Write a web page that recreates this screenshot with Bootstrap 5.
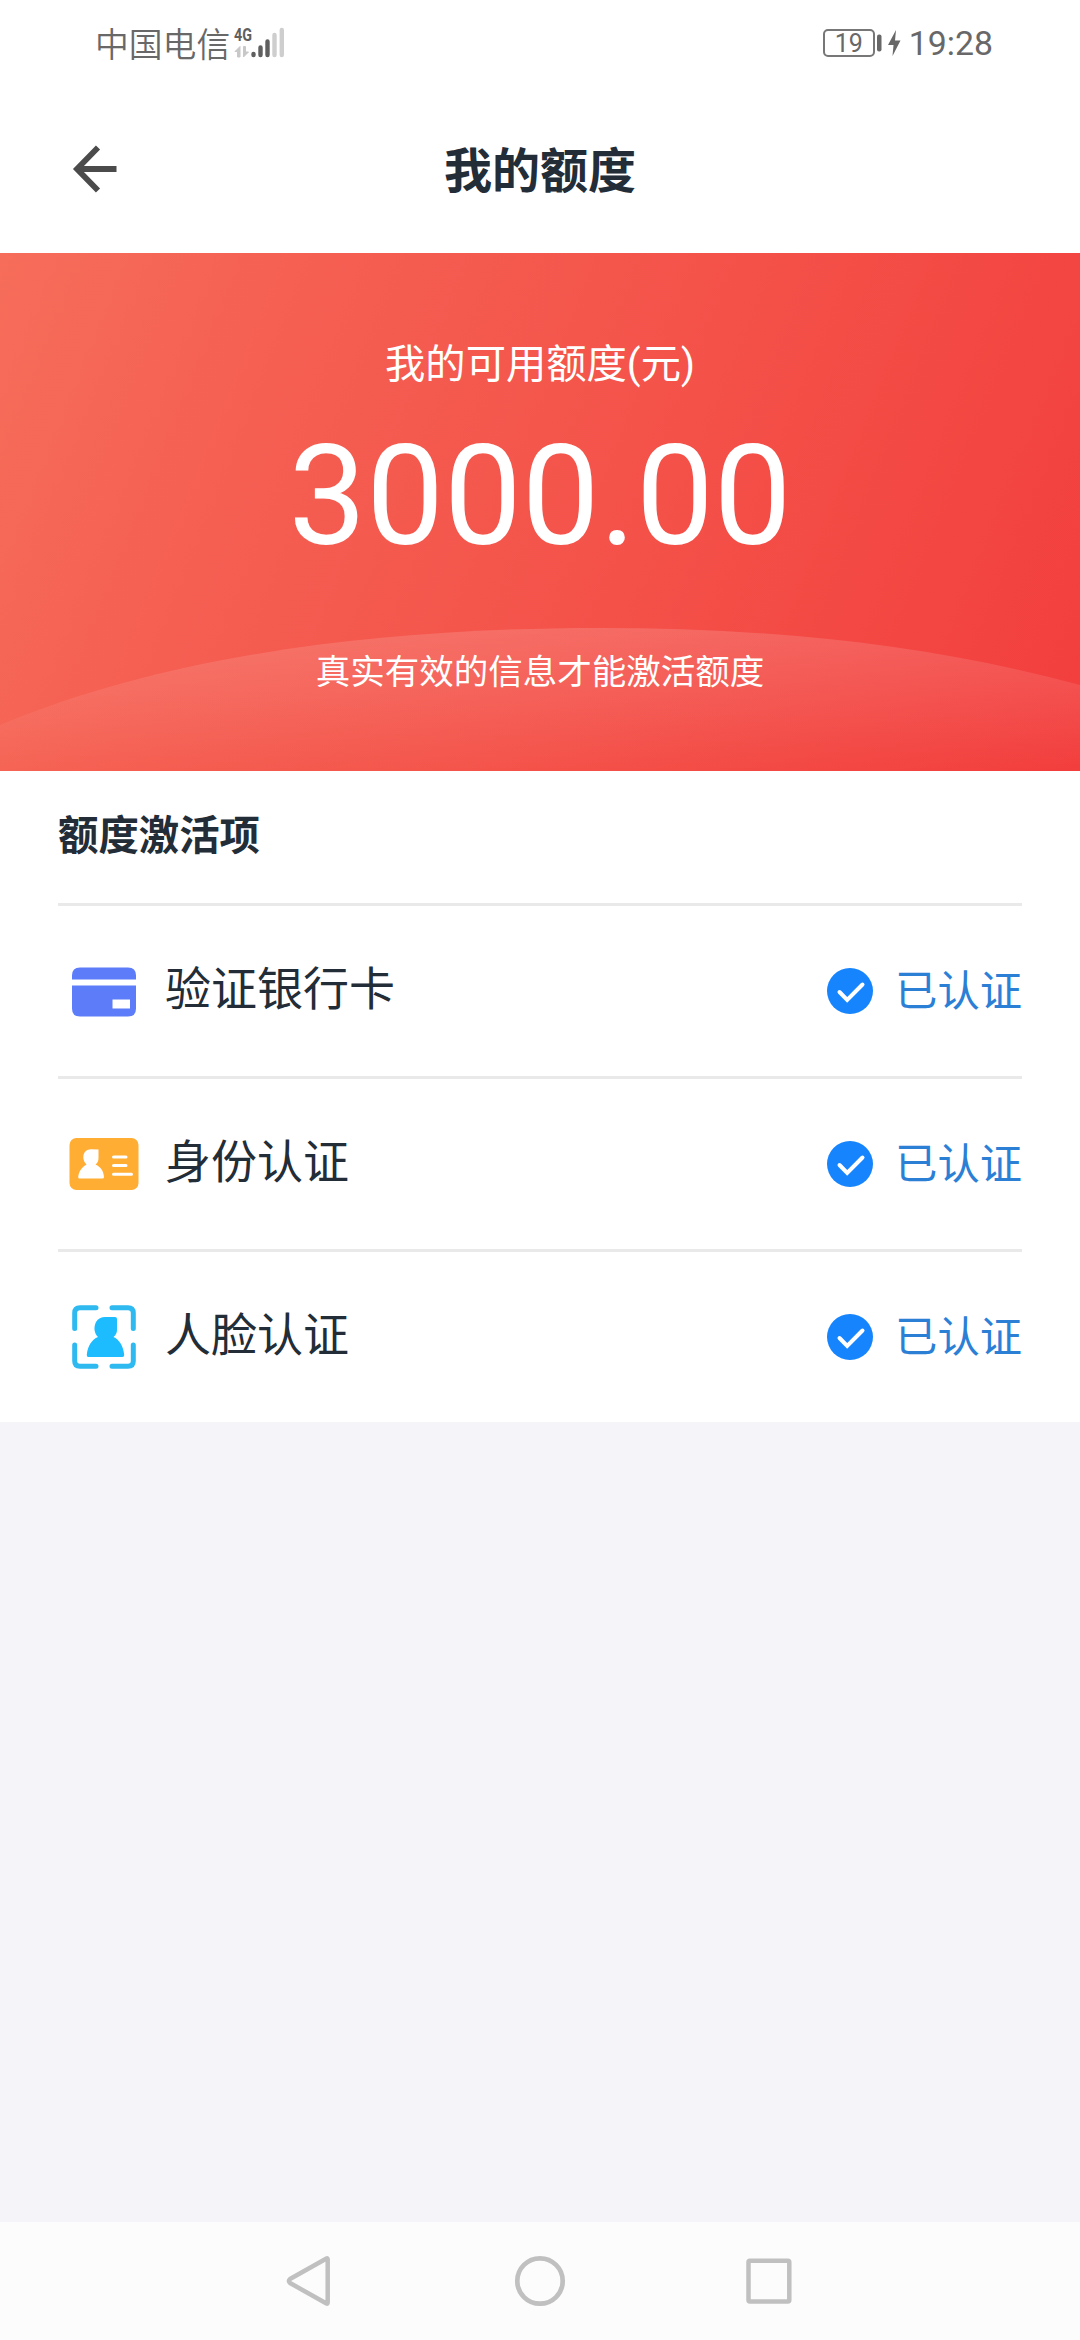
<!DOCTYPE html>
<html lang="zh-CN">
<head>
<meta charset="utf-8">
<meta name="viewport" content="width=device-width, initial-scale=1">
<title>我的额度</title>
<link rel="stylesheet" href="https://cdn.jsdelivr.net/npm/bootstrap@5.3.0/dist/css/bootstrap.min.css">
<style>
  body { font-family: "Noto Sans CJK SC", sans-serif; color: #232d37; background: #f4f4f9; line-height: 1; }
  svg { display: block; flex: none; }
  .screen { width: 1080px; height: 2340px; }
  .statusbar { height: 86px; padding: 0 87px 0 95px; color: #686868; font-size: 33.8px; }
  .carrier { font-weight: 350; }
  .latin { font-family: Roboto, sans-serif; }
  .clock { padding-top: 2px; }
  .battery { width: 52px; height: 28px; border: 2px solid #777; border-radius: 5px; font-size: 25px; line-height: 25px; }
  .titlebar { height: 167px; padding-bottom: 6px; }
  .titlebar h1 { font-size: 48px; font-weight: 700; line-height: 56px; }
  .back-arrow { left: 48px; top: 53px; }
  .hero { height: 518px; background: linear-gradient(112deg, #f66d5a 0%, #f55f52 25%, #f4534a 55%, #f34642 82%, #f23e3d 100%); }
  .hero-arc { z-index: 0; }
  .hero-text { z-index: 1; padding-top: 83px; }
  .hero-label { font-size: 40.3px; line-height: 50px; }
  .amount { font-size: 138.4px; line-height: 140px; margin-top: 37px; }
  .hero-hint { font-size: 34.5px; line-height: 44px; margin-top: 80px; }
  .panel { height: 651px; padding: 0 58px; }
  .panel h2 { font-size: 40.4px; font-weight: 700; height: 132px; line-height: 123px; }
  .auth-row { height: 173px; border-top: 3px solid #e9e9e9; padding-left: 8px; }
  .auth-name { font-size: 46px; margin-left: 22px; line-height: 60px; padding-bottom: 12px; }
  .auth-state { font-size: 42.3px; color: #2b80d6; margin-left: 22px; line-height: 56px; padding-bottom: 7px; }
  .sysnav { height: 118px; background: #fcfcfc; gap: 170px; }
</style>
</head>
<body>
<div class="screen d-flex flex-column">
  <div class="statusbar bg-white d-flex align-items-center justify-content-between">
    <div class="d-flex align-items-center">
      <span class="carrier">中国电信</span>
      <svg class="ms-1" width="54" height="42" viewBox="0 -4 54 42">
        <text x="0" y="14.500" font-family="Roboto" font-weight="700" font-size="18.5" textLength="18" lengthAdjust="spacingAndGlyphs" fill="#5f5f5f">4G</text>
        <path d="M6 20.500V31H3.500V25.500H1ZM9.500 20.500V31L14.500 26H11.500V20.500Z" fill="#c8c8c8" stroke="#c8c8c8"/>
        <g stroke-width="4.400" stroke-linecap="round" stroke="#5f5f5f">
          <path d="M19.500 28V29M26.500 21.500V29M33.500 15.500V29"/>
          <path d="M40.500 9V29M47.800 4V29" stroke="#cecece"/>
        </g>
      </svg>
    </div>
    <div class="d-flex align-items-center latin">
      <div class="battery d-flex justify-content-center">19</div>
      <svg width="34" height="28" viewBox="0 0 34 28">
        <rect x="2" y="5.500" width="4.500" height="17" rx="2" fill="#686868"/>
        <path d="M21 1 13 16H18.500L17.500 27 25.500 11.500H20Z" fill="#686868"/>
      </svg>
      <span class="clock">19:28</span>
    </div>
  </div>

  <header class="titlebar bg-white position-relative d-flex justify-content-center align-items-center">
    <svg class="back-arrow position-absolute" width="90" height="60" viewBox="48 139 90 60">
      <path d="M98 147.500 77 169 98 190.500M77 169H116.500" fill="none" stroke="#4b4b4b" stroke-width="5.800"/>
    </svg>
    <h1 class="m-0">我的额度</h1>
  </header>

  <section class="hero position-relative overflow-hidden text-white text-center">
    <svg class="hero-arc position-absolute bottom-0 start-0" width="1080" height="143" viewBox="0 0 1080 143">
      <defs><linearGradient id="glow" x1="0" y1="0" x2="0" y2="143" gradientUnits="userSpaceOnUse">
        <stop offset="0" stop-color="#fff" stop-opacity=".15"/><stop offset="1" stop-color="#fff" stop-opacity="0"/>
      </linearGradient></defs>
      <path d="M0 97C180 22 400 0 600 0C760 0 920 14 1080 57V143H0Z" fill="url(#glow)"/>
    </svg>
    <div class="hero-text position-relative">
      <div class="hero-label">我的可用额度<span class="latin">(</span>元<span class="latin">)</span></div>
      <div class="amount latin">3000.00</div>
      <div class="hero-hint">真实有效的信息才能激活额度</div>
    </div>
  </section>

  <main class="panel bg-white">
    <h2 class="m-0">额度激活项</h2>
    <div class="auth-row d-flex align-items-center">
      <svg width="77" height="70" viewBox="66 1127.500 77 70">
        <path d="M72 1151V1147Q72 1139 80 1139H128Q136 1139 136 1147V1151ZM72 1157H136V1180Q136 1188 128 1188H80Q72 1188 72 1180ZM112.500 1171V1180H130V1171Z" fill="#5c7cfa" fill-rule="evenodd"/>
      </svg>
      <span class="auth-name me-auto">验证银行卡</span>
      <svg width="46" height="46" viewBox="0 0 46 46"><circle cx="23" cy="23" r="23" fill="#1684fc"/><path d="M12.500 24 20.200 32 35.500 16.500" fill="none" stroke="#fff" stroke-width="4" stroke-linecap="round"/></svg>
      <span class="auth-state">已认证</span>
    </div>
    <div class="auth-row d-flex align-items-center">
      <svg width="77" height="70" viewBox="66 1129 77 70">
        <rect x="69.500" y="1138" width="69" height="52" rx="7" fill="#ffad33"/>
        <path d="M98.500 1149.500V1158Q98.500 1162.500 95.500 1164.500C101 1167 103.500 1171 104 1177Q104 1178.500 102.500 1178.500H79.500Q78 1178.500 78.200 1177C79 1171 82 1167 86.500 1164.500C83 1161 82.500 1156 84.500 1152.500Q87 1149.200 91 1149.200Z" fill="#fff"/>
        <path d="M113.500 1157H126M113.500 1165.500H126M113.500 1174.200H131.500" stroke="#fff" stroke-width="3" stroke-linecap="round"/>
      </svg>
      <span class="auth-name me-auto">身份认证</span>
      <svg width="46" height="46" viewBox="0 0 46 46"><circle cx="23" cy="23" r="23" fill="#1684fc"/><path d="M12.500 24 20.200 32 35.500 16.500" fill="none" stroke="#fff" stroke-width="4" stroke-linecap="round"/></svg>
      <span class="auth-state">已认证</span>
    </div>
    <div class="auth-row d-flex align-items-center">
      <svg width="77" height="70" viewBox="66 1302 77 70">
        <path d="M74.700 1328.500V1313Q74.700 1307.700 80 1307.700H96M112 1307.700H128Q133.300 1307.700 133.300 1313V1328.500M133.300 1345V1361Q133.300 1366.300 128 1366.300H112M96 1366.300H80Q74.700 1366.300 74.700 1361V1345" fill="none" stroke="#2eb9f0" stroke-width="5" stroke-linecap="round"/>
        <path d="M115 1317Q117 1317 117 1319V1330Q117 1334 113.500 1337C119 1339.500 123.500 1346 124.200 1355Q124.200 1357 122.500 1357H88.500Q86.500 1357 86.800 1355C87.500 1346 92 1339.500 98 1337C94 1333 93.500 1327 96 1322Q99 1317 105.500 1317Z" fill="#1dbcff"/>
      </svg>
      <span class="auth-name me-auto">人脸认证</span>
      <svg width="46" height="46" viewBox="0 0 46 46"><circle cx="23" cy="23" r="23" fill="#1684fc"/><path d="M12.500 24 20.200 32 35.500 16.500" fill="none" stroke="#fff" stroke-width="4" stroke-linecap="round"/></svg>
      <span class="auth-state">已认证</span>
    </div>
  </main>

  <nav class="sysnav mt-auto d-flex justify-content-center align-items-center">
    <svg width="60" height="60" viewBox="280 2251 60 60"><path d="M326.500 2258.500Q327.700 2258 327.700 2259.500V2302.500Q327.700 2304 326.500 2303.500L290 2283Q288 2281 290 2279Z" fill="none" stroke="#c0c0c0" stroke-width="4.500" stroke-linejoin="round"/></svg>
    <svg width="60" height="60" viewBox="510 2251 60 60"><circle cx="540" cy="2281" r="22.700" fill="none" stroke="#c0c0c0" stroke-width="4.700"/></svg>
    <svg width="60" height="60" viewBox="740 2251 60 60"><rect x="748.500" y="2260.800" width="40.800" height="40.800" rx="1.500" fill="none" stroke="#c0c0c0" stroke-width="4.500"/></svg>
  </nav>
</div>
<script src="https://cdn.jsdelivr.net/npm/bootstrap@5.3.0/dist/js/bootstrap.bundle.min.js"></script>
</body>
</html>
